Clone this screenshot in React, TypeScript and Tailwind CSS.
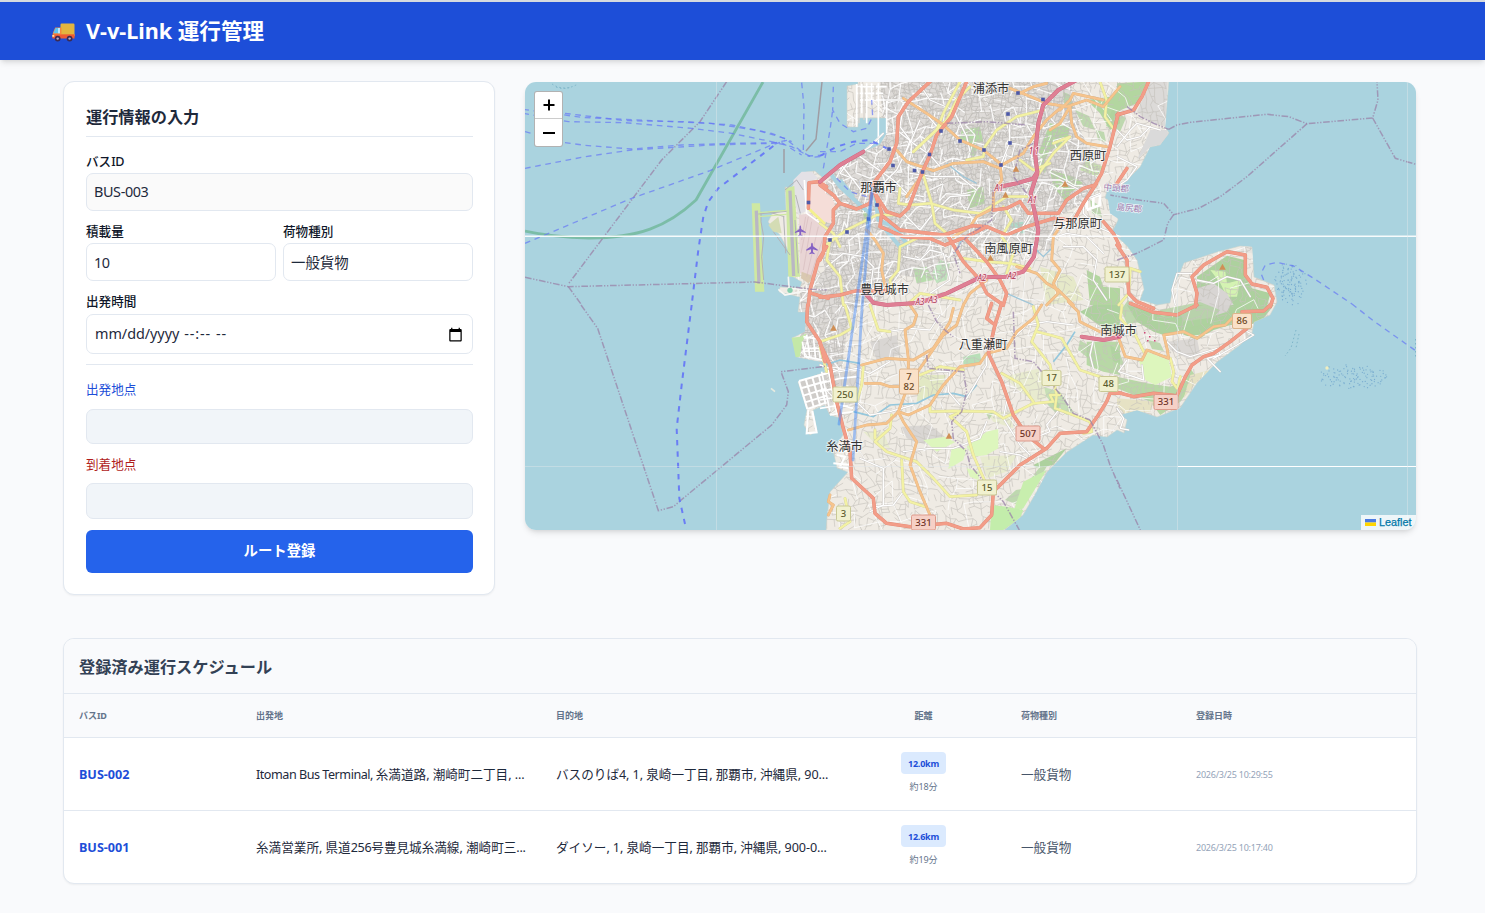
import React from "react";

type Zone = "a" | "b" | "c" | "d" | "e" | "f";
type Kind = "motorway" | "trunk" | "secondary" | "tertiary" | "local";

/* Map sheets: every sheet has a local grid three times finer than the canvas. */
const SHEET: Record<Zone, string> = {
  a: "translate(525 80) scale(0.33333)",
  b: "translate(820 80) scale(0.33333)",
  c: "translate(1117 80) scale(0.33333)",
  d: "translate(525 305) scale(0.33333)",
  e: "translate(820 305) scale(0.33333)",
  f: "translate(1117 305) scale(0.33333)",
};

const STYLE: Record<Kind, { edge: string; fill: string; w: number }> = {
  local: { edge: "#c4c0bd", fill: "#ffffff", w: 4 },
  tertiary: { edge: "#d6d39a", fill: "#f3f2a4", w: 6.5 },
  secondary: { edge: "#e0b282", fill: "#f6c48d", w: 6.5 },
  trunk: { edge: "#df8a76", fill: "#f39d88", w: 8.5 },
  motorway: { edge: "#c9607c", fill: "#df7f94", w: 10 },
};

const ROADS: [Kind, Zone, string][] = [
  ["local", "b", "300,15 330,60 400,90 440,170 450,215"],
  ["local", "b", "200,60 250,60 300,80 360,150"],
  ["local", "b", "190,160 150,200 90,240 60,280 110,300"],
  ["local", "b", "120,230 170,265 220,300 260,340 310,350"],
  ["local", "b", "230,150 280,190 330,225 360,260"],
  ["local", "b", "250,80 240,140 270,180 250,240"],
  ["local", "b", "300,120 270,190 230,270 180,320"],
  ["local", "b", "570,110 568,190 540,260"],
  ["local", "b", "250,400 300,450 340,400 390,350 450,345"],
  ["local", "b", "270,280 340,290 420,290 470,330"],
  ["local", "b", "60,250 100,300 130,340"],
  ["local", "b", "20,560 70,520 130,530 160,560 150,640"],
  ["local", "b", "250,530 300,540 330,510 370,520 390,600 330,640"],
  ["local", "b", "640,380 620,420 590,470 620,510"],
  ["local", "b", "640,300 720,300 780,330 830,310"],
  ["local", "b", "900,470 830,440 790,400 790,360 840,340"],
  ["local", "b", "730,500 790,500 830,540 820,600 860,660"],
  ["local", "b", "680,480 740,460 800,470 850,520"],
  ["local", "c", "0,200 40,150 60,130 130,150"],
  ["local", "c", "0,230 60,260 30,300 0,320"],
  ["local", "c", "0,150 30,180 70,170 100,140"],
  ["local", "c", "225,580 180,580 165,630 175,675"],
  ["local", "c", "240,600 290,610 330,590 370,600 400,650"],
  ["local", "e", "200,80 270,70 330,75 360,30"],
  ["local", "e", "0,180 60,200 110,190 150,205 210,170"],
  ["local", "e", "110,290 150,330 210,320 280,300"],
  ["local", "e", "120,460 190,490 190,600 150,620"],
  ["local", "e", "250,440 330,430 400,430 480,400 500,350"],
  ["local", "e", "350,200 390,200 385,260 420,300"],
  ["local", "e", "440,280 470,230 500,180 500,150"],
  ["local", "e", "560,290 550,340 600,420 630,450"],
  ["local", "e", "580,100 620,60 680,50 760,60"],
  ["local", "e", "720,310 680,360 690,380 640,400"],
  ["local", "e", "540,440 600,450 640,470"],
  ["local", "e", "250,560 220,600 160,605"],
  ["local", "e", "830,60 810,150 820,190"],
  ["local", "f", "150,110 180,140 220,155 300,130 310,150 270,160 310,200"],
  ["local", "f", "390,80 410,90 360,120 290,160"],
  ["local", "f", "30,165 5,200 80,225 75,180"],
  ["local", "f", "0,310 20,340 10,370 35,375"],
  ["tertiary", "b", "420,5 370,100 350,150 280,215"],
  ["tertiary", "b", "280,215 380,120 410,60 450,20"],
  ["tertiary", "b", "240,405 170,405 80,450 10,500"],
  ["tertiary", "b", "670,90 590,110 530,150 495,200 490,230 440,240"],
  ["tertiary", "b", "310,285 335,370 345,430 380,460"],
  ["tertiary", "b", "240,325 235,370 270,375 330,370 400,390 480,400 560,350 620,350"],
  ["tertiary", "b", "840,5 860,60 855,110 880,145"],
  ["tertiary", "b", "650,290 700,220 750,170 700,190"],
  ["tertiary", "b", "600,240 640,270 690,250"],
  ["tertiary", "b", "30,480 20,540 60,590 70,675"],
  ["tertiary", "b", "300,470 240,500 235,570 210,600 220,640"],
  ["tertiary", "b", "550,380 575,420 545,470 580,520 560,580"],
  ["tertiary", "b", "430,535 500,545 570,550 630,565"],
  ["tertiary", "b", "0,430 40,460 60,500"],
  ["tertiary", "b", "260,675 300,640 420,660"],
  ["tertiary", "e", "150,0 175,75 210,80"],
  ["tertiary", "e", "75,0 95,70 60,90 0,110"],
  ["tertiary", "e", "300,210 360,185 430,195"],
  ["tertiary", "e", "330,300 330,320 400,318 520,320 550,340 640,295 700,290 690,270 720,270"],
  ["tertiary", "e", "640,5 655,60 635,110 690,180 710,270 705,310 760,330 810,350 815,380 790,385"],
  ["tertiary", "e", "650,80 690,90 725,100 780,195 840,215"],
  ["tertiary", "e", "545,205 600,235 640,290"],
  ["tertiary", "e", "420,322 390,335 440,380 460,450 495,530"],
  ["tertiary", "e", "215,330 210,370 165,410 200,440 290,470 340,520 390,575 470,570"],
  ["tertiary", "e", "245,465 250,560 270,590 315,605"],
  ["tertiary", "e", "130,185 125,240 110,290"],
  ["tertiary", "e", "165,400 165,375"],
  ["tertiary", "e", "0,125 20,200"],
  ["tertiary", "e", "60,670 90,650 75,580"],
  ["tertiary", "f", "15,0 10,40 55,90 80,140"],
  ["tertiary", "f", "160,160 170,200 165,230 180,250 190,215"],
  ["tertiary", "c", "5,675 35,640 40,565 70,575"],
  ["secondary", "b", "250,55 320,100 370,135 420,180 490,210 540,250 545,300 520,340 520,385 470,410 450,440 400,470"],
  ["secondary", "b", "230,210 260,245 340,272 400,250 490,245 540,265"],
  ["secondary", "b", "545,255 610,220 640,170 680,120 720,85"],
  ["secondary", "b", "570,25 620,45 680,70 740,80 800,60 850,80 900,20"],
  ["secondary", "b", "720,90 750,60 760,40 850,60"],
  ["secondary", "b", "750,80 755,130 770,170 800,190 860,200"],
  ["secondary", "b", "750,80 720,130 690,150"],
  ["secondary", "b", "720,440 700,470 695,540 720,570 700,610 715,640 680,675"],
  ["secondary", "b", "590,560 650,580 680,610 715,630 760,675"],
  ["secondary", "b", "140,450 165,480 190,520 185,570 200,640"],
  ["secondary", "b", "500,600 450,640 430,675"],
  ["secondary", "b", "260,350 310,280"],
  ["secondary", "b", "680,10 640,20 600,40"],
  ["secondary", "e", "270,0 290,30 280,60 255,75 265,160 265,200"],
  ["secondary", "e", "125,180 200,160 280,165 340,130 390,50 400,10"],
  ["secondary", "e", "430,0 410,60 370,90 300,190 265,240"],
  ["secondary", "e", "135,235 180,235 210,245 240,245"],
  ["secondary", "e", "235,320 265,330 330,300 370,240 420,185 480,175 500,145 560,130 590,80 640,40 665,0"],
  ["secondary", "e", "265,240 235,320 200,355 140,360 85,375"],
  ["secondary", "e", "235,320 250,350 290,410 270,480 300,560 330,630"],
  ["secondary", "e", "745,-10 775,20 780,50 840,80 900,90"],
  ["secondary", "e", "30,570 25,590 40,600 25,630"],
  ["secondary", "f", "5,100 25,155 75,165 90,135 155,160 150,130 140,90 200,80 240,100 290,65 325,60 345,40"],
  ["trunk", "b", "330,5 265,65 235,110 230,190 210,245 160,310 150,370 110,387 60,370 40,390 40,430 15,470 10,520 0,540"],
  ["trunk", "b", "0,315 40,345 60,370"],
  ["trunk", "a", "905,320 880,305 852,308 850,385"],
  ["trunk", "a", "905,500 880,540 855,630 850,675"],
  ["trunk", "a", "860,640 910,655"],
  ["trunk", "d", "848,0 845,50 885,110 900,170"],
  ["trunk", "b", "440,5 395,110 350,165 330,225 305,280 265,385 240,408 200,395 165,340"],
  ["trunk", "b", "165,340 185,400 180,440 250,470 330,475 375,495 440,470 500,440 560,465 620,440 700,415 760,420"],
  ["trunk", "b", "190,410 240,450 370,465 460,437 500,440"],
  ["trunk", "b", "385,470 430,545 480,600 500,640 550,675"],
  ["trunk", "b", "430,470 500,545 540,600 560,640 550,675"],
  ["trunk", "b", "895,100 870,200 845,280 825,315 790,325 740,360 715,400 655,400"],
  ["trunk", "b", "830,310 790,370 765,415"],
  ["trunk", "b", "520,390 560,385 600,365 625,400 650,400"],
  ["trunk", "b", "850,425 880,460 900,500"],
  ["trunk", "c", "0,495 30,540 35,640 60,665 110,685"],
  ["trunk", "c", "97,0 75,50 50,90 0,105"],
  ["trunk", "c", "30,265 0,310"],
  ["trunk", "c", "235,680 240,640 225,590 260,555 330,515 385,525 385,585 405,612 450,622 468,655 460,680"],
  ["trunk", "b", "0,652 60,645 110,632 200,632"],
  ["trunk", "f", "0,262 50,275 110,265 180,272 205,215 225,180 260,155 290,145 340,110 390,70"],
  ["trunk", "f", "375,20 440,18 460,0"],
  ["trunk", "f", "40,-5 110,22 180,30 240,0"],
  ["trunk", "e", "0,115 30,180 50,290 70,370 90,440 95,520 160,580 165,625 200,655 270,665 380,655 430,672 480,668 515,630 520,560 600,480 680,430 720,385 800,380 835,330 860,290 870,265 905,265"],
  ["trunk", "e", "515,-5 500,40 525,60 545,-5"],
  ["trunk", "e", "525,60 505,145 545,230 580,330 620,390 670,430"],
  ["motorway", "b", "770,0 715,30 670,75 655,130 645,220 652,280 632,340 645,400 655,450 642,530 610,575 560,590 480,592 380,640 300,668 200,675 160,668 140,645"],
  ["motorway", "b", "652,275 640,295 590,310 540,320"],
  ["motorway", "b", "0,305 60,255 130,215"],
  ["motorway", "e", "785,95 850,105 900,95"],
];

const LAND =
  "858,80 858,84 847,86 847,127 858,127 858,118 887,118 887,133 880,145 863,152 840,163 823,178 815,171 806,172 797,180 791,188 785,187 786,210 772,214 768,222 780,235 788,250 790,275 802,282 800,288 780,287 779,292 800,297 798,312 807,312 805,332 792,338 797,357 823,362 825,372 798,382 807,410 804,425 810,435 817,431 813,410 825,405 830,415 840,418 843,435 833,450 837,468 848,472 830,492 827,518 826,532 1002,532 1023,515 1033,498 1047,472 1067,452 1093,435 1107,437 1117,430 1124,433 1127,420 1120,415 1137,410 1157,417 1180,408 1197,383 1217,362 1240,345 1252,333 1254,322 1270,315 1277,302 1274,285 1254,277 1252,247 1240,246 1217,252 1184,263 1180,273 1174,283 1170,303 1157,305 1140,300 1144,289 1137,260 1127,246 1112,232 1118,220 1117,206 1105,198 1108,187 1120,187 1140,167 1150,147 1160,145 1169,133 1165,127 1169,80";

const BUILT =
  "880,80 1070,80 1080,130 1100,170 1090,200 1060,215 1050,250 1010,265 960,262 940,280 900,275 880,300 850,310 840,380 830,415 800,380 800,290 825,270 812,200 840,165 885,140";

const shapes: [Zone, string, string][] = [
  ["b", "#eeeae4", "350,480 520,490 640,480 690,520 690,675 420,675 370,600"],
  ["b", "#e9e7e3", "230,300 300,300 300,350 250,390"],
  ["b", "#b5d9a5", "425,150 480,140 490,185 450,195 420,175"],
  ["b", "#bfe3bd", "360,540 390,550 380,600 350,610 335,580"],
  ["b", "#b8dcac", "280,565 320,560 340,600 290,610"],
  ["b", "#b3d6a0", "440,330 490,320 495,370 450,385"],
  ["b", "#b3d6a0", "690,130 750,140 740,190 690,210 670,250 655,220"],
  ["b", "#b3d6a0", "690,270 760,290 790,310 750,340 740,370 700,320"],
  ["b", "#b3d6a0", "800,60 870,50 900,20 900,130 870,150 840,100"],
  ["b", "#c8e0b0", "800,240 850,260 830,290 780,270"],
  ["b", "#b3d6a0", "800,570 840,590 850,620 900,625 900,675 810,675"],
  ["b", "#aed9c8", "570,430 610,425 615,460 580,460"],
  ["b", "#e6e9c9", "660,560 760,590 790,660 680,675"],
  ["b", "#add19e", "120,370 150,400 140,440"],
  ["c", "#b3d6a0", "0,10 90,5 60,70 0,95"],
  ["c", "#dcdad8", "100,5 152,5 145,140 95,125 60,95"],
  ["c", "#add19e", "240,590 330,527 382,540 385,590 405,625 460,640 450,680 240,680"],
  ["c", "#d4f3b2", "280,570 325,575 330,610 370,600 360,650 330,650 310,610"],
  ["c", "#d8d5d3", "240,625 290,610 330,640 350,675 240,675"],
  ["c", "#e5e3df", "370,500 405,497 405,518 375,518"],
  ["f", "#add19e", "30,0 80,10 140,35 235,10 260,0 470,0 440,40 400,60 340,60 290,75 240,105 190,85 140,90 110,80 60,50"],
  ["f", "#d6d3d1", "190,25 260,0 340,0 330,20 270,40 200,50"],
  ["f", "#b8d8a6", "0,215 90,235 160,245 195,230 220,190 240,220 190,290 130,330 100,290 0,250"],
  ["f", "#e6e2c4", "0,280 60,285 110,290 100,320 20,325 0,300"],
  ["f", "#dbd8d5", "150,110 240,100 250,150 210,160 160,135"],
  ["f", "#e6e2c4", "220,210 280,195 240,230 200,280"],
  ["e", "#add19e", "780,20 820,0 900,0 900,90 850,70"],
  ["e", "#b8d8a6", "800,110 900,110 900,210 850,200 800,180"],
  ["e", "#c6dfb6", "650,240 720,260 760,320 740,330 700,300"],
  ["e", "#b8dfb8", "430,155 480,145 485,175 430,178"],
  ["e", "#e2e8c4", "300,210 380,210 350,270 290,290"],
  ["e", "#e8ebcf", "550,215 660,190 680,280 640,290 590,250"],
  ["e", "#e8ebcf", "500,320 570,320 580,370 520,350"],
  ["e", "#e8ebcf", "480,455 590,450 560,500 500,520"],
  ["e", "#e8ebcf", "130,380 190,380 210,430 170,420"],
  ["e", "#add19e", "640,480 740,430 700,480 650,490"],
  ["e", "#a9dfc0", "35,205 60,205 60,235 35,235"],
  ["e", "#d9d6d3", "245,365 330,360 380,400 320,420 260,400"],
  ["e", "#d9d6d3", "0,120 50,130 70,200 110,200 110,300 60,300"],
  ["e", "#d9d6d3", "150,110 230,90 240,150 170,165"],
  ["a", "#e3e1e6", "805,300 830,275 860,275 880,295 850,305 850,390 820,405 808,360"],
  ["a", "#e9d5d5", "822,405 855,400 900,440 900,505 870,595 825,580"],
  ["a", "#f5ddd8", "855,310 900,305 900,430 855,385"],
  ["a", "#d9c8b0", "830,575 870,590 850,610 828,595"],
  ["a", "#cfe8a2", "680,370 705,370 718,635 690,635"],
  ["a", "#cfe8a2", "782,325 808,318 825,590 790,590"],
  ["a", "#d4dcb4", "730,435 760,410 770,460 745,455"],
];

/* Open ground without streets: golf courses, parks and the harbour yard. */
const OPEN_GROUND: [Zone, string, string][] = [
  ["b", "#f5ddd8", "0,330 35,350 45,375 30,430 0,420"],
  ["c", "#dadada", "60,240 100,150 150,150 155,165 130,195 100,200"],
  ["f", "#ddf6bd", "65,165 90,140 155,165 165,215 115,240 85,225"],
  ["e", "#ddf6bd", "310,405 375,395 405,412 350,440"],
  ["e", "#ddf6bd", "395,430 440,430 430,465 385,492"],
  ["e", "#ddf6bd", "440,425 500,380 535,372 535,430 500,450 460,455"],
  ["e", "#ddf6bd", "440,490 480,500 475,525 450,515"],
  ["e", "#c8eeae", "610,530 680,495 610,610 580,620"],
  ["e", "#c3edab", "515,600 560,605 610,615 600,640 550,675 510,675"],
];

function streets(step: number, seed: number, keep: number, x0: number, y0: number, x1: number, y1: number) {
  let s = seed;
  const rnd = () => {
    s = (s * 1664525 + 1013904223) % 4294967296;
    return s / 4294967296;
  };
  const cols = Math.ceil((x1 - x0) / step);
  const rows = Math.ceil((y1 - y0) / step);
  const pts: [number, number][][] = [];
  for (let r = 0; r <= rows; r++) {
    pts.push([]);
    for (let c = 0; c <= cols; c++) {
      const x = x0 + c * step + (rnd() - 0.5) * step * 0.9 + Math.sin(r / 4) * step;
      const y = y0 + r * step + (rnd() - 0.5) * step * 0.9 + Math.cos(c / 5) * step;
      pts[r].push([Math.round(x * 10) / 10, Math.round(y * 10) / 10]);
    }
  }
  let d = "";
  for (let r = 0; r < rows; r++)
    for (let c = 0; c < cols; c++) {
      const p = pts[r][c];
      if (rnd() < keep) d += `M${p}L${pts[r][c + 1]}`;
      if (rnd() < keep) d += `M${p}L${pts[r + 1][c]}`;
    }
  return d;
}

const RURAL = streets(5.5, 7, 0.58, 790, 74, 1290, 540);
const RURAL_WHITE = streets(17, 43, 0.5, 790, 74, 1290, 540);
const TOWN_GREY = streets(4, 21, 0.75, 790, 74, 1110, 430);
const TOWN_WHITE = streets(12, 99, 0.6, 790, 74, 1180, 470);

const BOUNDARIES: [Zone, string][] = [
  ["a", "605,5 525,125 450,200 410,240 130,612"],
  ["a", "0,592 130,620 690,606 860,628 905,630"],
  ["a", "130,620 170,675"],
  ["d", "168,0 218,70 400,617 445,605 465,588 740,360 785,300 790,260 768,200 900,184"],
  ["c", "155,148 180,135 220,127 450,103 515,110 570,131 767,114 783,60 780,5"],
  ["c", "767,114 835,235 900,254"],
  ["c", "570,131 390,290 310,350 245,385 170,404 140,370 50,358 -20,345"],
  ["c", "170,404 152,430 140,480 60,520 0,540"],
  ["c", "30,80 70,110 110,130 155,148"],
  ["e", "810,345 850,420 870,480 900,550"],
  ["f", "0,525 70,675"],
  ["e", "325,0 350,50 380,80 400,95"],
  ["e", "320,150 325,190 430,200 440,260 425,320 395,350 400,400 440,440 450,480 500,540 550,590 598,675"],
  ["e", "580,20 585,160 640,170 690,230 730,280 760,325 810,345"],
  ["b", "380,130 500,125 620,135"],
  ["b", "520,330 515,420 440,470 400,520 420,580"],
  ["b", "640,190 600,210 580,290 620,340"],
];

const FERRIES: [Zone, string, number][] = [
  ["a", "-5,88 170,112 380,122 560,130 700,152 780,175 830,215 860,232 900,228", 4],
  ["a", "-5,100 130,125 300,128 500,145 620,160 740,185 800,200 850,228 900,225", 4],
  ["a", "120,100 300,122 480,125 620,135 740,160 800,185", 4],
  ["a", "120,188 180,196 320,207 470,195 620,190 770,188 830,225", 4],
  ["a", "0,155 30,163", 4],
  ["a", "0,265 180,230 320,210 560,195 740,190 790,180", 4],
  ["a", "0,490 320,355 555,272 740,195 780,183", 4],
  ["a", "745,198 580,325 550,365 535,410 520,510 500,675", 6],
  ["a", "830,8 837,80 835,210", 4],
  ["d", "500,0 470,240 455,370 460,500 463,580 484,675", 6],
  ["b", "0,228 50,200 100,185 150,180 200,205", 6],
  ["b", "0,215 60,215 110,190 170,190", 4],
  ["b", "40,20 38,90 60,130 100,155 140,145 158,110 155,60", 4],
  ["b", "10,265 30,150 38,90", 4],
  ["b", "50,295 90,335 140,350", 4],
  ["c", "440,600 432,580 445,555 480,547 530,558 590,595 705,672", 4],
  ["f", "705,-3 770,48 900,140", 4],
];

const PLACES: [number, number, string][] = [
  [991, 93, "浦添市"],
  [1088, 159.5, "西原町"],
  [878.5, 191.5, "那覇市"],
  [1077.5, 227.5, "与那原町"],
  [1008.5, 252.5, "南風原町"],
  [884.5, 293.5, "豊見城市"],
  [983, 348.5, "八重瀬町"],
  [1118.5, 334.5, "南城市"],
  [844.5, 450.5, "糸満市"],
];

const SHIELDS: [number, number, string, string][] = [
  [1117, 274.5, "137", "y"],
  [1242, 321, "86", "o"],
  [845, 394.5, "250", "y"],
  [1051.5, 378, "17", "y"],
  [1108.5, 384, "48", "y"],
  [1166, 402, "331", "r"],
  [1028, 433.5, "507", "r"],
  [987, 487.5, "15", "y"],
  [843.5, 513.5, "3", "y"],
  [923.5, 522.5, "331", "r"],
];

const SHIELD_COLOR: Record<string, [string, string, string]> = {
  y: ["#f1f1cf", "#c9c995", "#5b5b2d"],
  o: ["#fae1c8", "#dcb48b", "#6b4724"],
  r: ["#f6d0c6", "#dd9a8b", "#6e3226"],
};

const STATIONS: [number, number][] = [
  [1018, 93], [1008, 114], [1043, 99.5], [941, 131], [960, 141], [1010, 143], [984, 150], [929.5, 154.5],
  [1001, 165], [893, 165.5], [914.5, 170.5], [922.5, 172], [889, 149], [877, 205], [868.5, 219], [847, 232], [830, 240], [808.5, 202.5],
];

const PEAKS: [number, number][] = [[1016, 169], [1005.5, 195], [1065, 184], [990.5, 258], [1222.5, 267], [833.5, 328], [949, 436]];

const dots: [number, number][] = [];
for (let i = 0; i < 230; i++) {
  const a = i * 2.39996;
  const q = Math.sqrt(((i % 115) + 0.5) / 115);
  const second = i >= 115;
  dots.push(
    second
      ? [1290 + Math.sin(i * 7.3) * 4 + Math.cos(a) * q * 14, 283 + Math.cos(i * 5.1) * 4 + Math.sin(a) * q * 19]
      : [1354 + Math.sin(i * 7.3) * 3 + Math.cos(a) * q * 35, 377 + Math.cos(i * 5.1) * 2 + Math.sin(a) * q * 11]
  );
}

const plane = "M0,-6 C.8,-6 1,-4.5 1,-2.3 L6,1 V2.3 L1,.8 V3.8 L2.8,5.2 V6 L0,5.3 L-2.8,6 V5.2 L-1,3.8 V.8 L-6,2.3 V1 L-1,-2.3 C-1,-4.5 -.8,-6 0,-6Z";

function RouteMap() {
  return (
    <svg viewBox="525 82 891 448" className="block h-full w-full" preserveAspectRatio="none">
      <defs>
        <clipPath id="land"><polygon points={LAND} /></clipPath>
        <clipPath id="built"><polygon points={BUILT} /></clipPath>
      </defs>
      <rect x="525" y="82" width="892" height="448" fill="#aad3df" />
      <g fill="#7aadd0">
        {dots.map(([x, y], i) => <circle key={i} cx={x} cy={y} r="0.65" />)}
        <circle cx="1327" cy="368" r="1.7" fill="#f1eec0" />
      </g>
      <g fill="none" stroke="#7eb5c9" strokeDasharray="1.5 2.5" strokeWidth="1">
        <path d="M552 84q12 8 26 0M556 87q8 3 15 0M1296 330l-5 18-6 8M1299 334l-3 14M1415.500 339v18" />
      </g>
      <polygon points={LAND} fill="#efebe4" stroke="#c9d5cf" strokeWidth="0.6" />
      <g clipPath="url(#land)">
        <polygon points={BUILT} fill="#dedbd8" />
        {shapes.filter(([z]) => z !== "a").map(([z, c, p], i) => <polygon key={i} points={p} fill={c} transform={SHEET[z]} />)}
        <g fill="#add19e" opacity="0.75">
          <path d="M1090 200l9 5 3 12-10-4zM1063 92l8 3 2 14-9-4zM1075 110l14 6 6 14-12-4zM1128 300l9 8 4 14-14 2-6-14zM1160 310l40-8 20 8-12 14-30 6-20-8zM970 145l7 3-2 9-6-3zM1052 395l8 10-4 8-9-9zM1005 500l11-10 12-2-12 16zM985 410l8 3-4 7zM1080 340l12 8-4 10-10-8zM1112 110l14 8-6 14-14-6zM1096 130l8 2 2 10-8-2zM1040 160l8 4-3 9-6-4zM1110 345l9 6 6 16-12-6zM1148 340l12 3 4 8-12-2zM1030 480l9-12 8-2-8 14z" />
        </g>
        <path d={RURAL} fill="none" stroke="#c6c2bc" strokeWidth="0.7" strokeOpacity="0.9" />
        <path d={RURAL_WHITE} fill="none" stroke="#fff" strokeWidth="1" strokeOpacity="0.75" />
        <g clipPath="url(#built)" fill="none">
          <path d={TOWN_GREY} stroke="#bfbcb9" strokeWidth="0.8" />
          <path d={TOWN_WHITE} stroke="#ffffff" strokeWidth="1.200" strokeOpacity="0.9" />
        </g>
        {OPEN_GROUND.map(([z, c, p], i) => <polygon key={i} points={p} fill={c} transform={SHEET[z]} />)}
      </g>
      {shapes.filter(([z]) => z === "a").map(([z, c, p], i) => <polygon key={i} points={p} fill={c} transform={SHEET[z]} />)}
      <g transform={SHEET.a} fill="none">
        <path d="M694 392L702 610M795 332L806 588" stroke="#b9b7c4" strokeWidth="10" />
        <path d="M708 395V425L716 470 710 530 716 600M700 402L785 394M780 330L815 300 835 330M812 345L826 400M810 420L820 580M776 410L782 520M745 455L795 525M728 395L778 410" stroke="#b3b2b6" strokeWidth="3" />
        <path d="M700 398L785 391M700 410L785 403" stroke="#cfe8a2" strokeWidth="4" />
        <path d="M835 570L860 425M845 590L880 440M855 595L895 470M828 520L850 410M830 480L842 410" stroke="#d2b6b8" strokeWidth="1.6" />
        <path d="M790 590L792 625 855 630M760 628L780 645 830 635" stroke="#f7f7f4" strokeWidth="5" />
        <path d="M838 300L845 400 900 440" stroke="#ffffff" strokeWidth="5" />
        <path d="M853 388L900 432" stroke="#f4f08c" strokeWidth="8" />
        <circle cx="795" cy="631" r="8" fill="#86cfae" />
      </g>
      <g transform={SHEET.b} fill="none">
        <path d="M110 12V140M125 12V100M140 10V130M120 60H240M155 10V70M175 10V190M200 60V160M190 160L130 215M110 20H200M110 40H190" stroke="#ffffff" strokeWidth="5" />
        <path d="M117 20V130M132 25V120M165 15V60" stroke="#d8d4ce" strokeWidth="4" />
        <path d="M35 285L60 320 120 375 150 400M165 345L175 420 220 440 260 490 240 500 190 440M60 300L100 350" stroke="#aad3df" strokeWidth="12" />
        <path d="M380 250L430 290 470 310M500 440L470 460 430 470 405 520M560 640L640 675M640 500L670 530 700 500" stroke="#9fc6d8" strokeWidth="4" />
        <path d="M785 360L840 345 840 375 800 390M820 350V385M800 357V388" stroke="#fff" strokeWidth="8" />
        <path d="M860 330L900 350V420L870 400Z" fill="#aad3df" />
      </g>
      <g transform={SHEET.e} fill="none">
        <path d="M100 320L160 335 210 300 290 295 340 270 400 265 440 275M0 185L60 165 120 175M700 170L740 120 765 80M440 275L470 240" stroke="#94c7dc" strokeWidth="5" />
        <path d="M50 450L75 455 60 485 85 490M40 475L95 480M60 440L90 435" stroke="#fff" strokeWidth="6" />
      </g>
      <g transform={SHEET.d} fill="none">
        <polygon points="800,98 825,95 845,85 832,110 825,155 812,157" fill="#c4e8a8" />
        <path d="M832 110L840 155 895 165M835 95L895 105M845 90L855 160M865 95L872 162M835 130H895M885 110V160" stroke="#fff" strokeWidth="5" />
        <polygon points="822,228 905,205 905,298 847,312" fill="#cfccc9" />
        <path d="M822 228L905 205M828 250L905 228M835 272L905 250M840 292L905 272M847 312L905 292M822 228L847 312M842 222L867 308M862 217L886 303M882 212L902 298M850 315L845 385 875 382 862 318" stroke="#fff" strokeWidth="6" />
        <path d="M738 250L750 260" stroke="#e8ebe0" strokeWidth="5" />
      </g>
      <g transform={SHEET.e} fill="none" stroke="#fff" strokeWidth="5">
        <path d="M0 210L60 195 110 195M0 235L60 220 110 215M0 260L65 245M0 285L60 275M5 200L30 320M25 195L50 325M0 310L60 300 100 310M30 330L100 320" />
      </g>
      <g fill="none" strokeLinecap="round" strokeLinejoin="round">
        {(["local", "tertiary", "secondary", "trunk", "motorway"] as Kind[]).map((k) => (
          <g key={k}>
            {ROADS.filter((r) => r[0] === k).map(([, z, p], i) => (
              <polyline key={i} points={p} transform={SHEET[z]} stroke={STYLE[k].edge} strokeWidth={STYLE[k].w + 2} />
            ))}
            {ROADS.filter((r) => r[0] === k).map(([, z, p], i) => (
              <polyline key={i} points={p} transform={SHEET[z]} stroke={STYLE[k].fill} strokeWidth={STYLE[k].w} />
            ))}
          </g>
        ))}
      </g>
      <g fill="none">
        <path d="M525 231Q552 237 589 238C638 238 667 227 696 200L763 82" stroke="#73b99d" strokeWidth="2.8" opacity="0.85" />
        <path d="M822 82L816 139 806 151M784 149V173" stroke="#9f9ca3" strokeWidth="1.5" />
        {BOUNDARIES.map(([z, p], i) => (
          <polyline key={i} points={p} transform={SHEET[z]} stroke="#9a83a8" strokeOpacity="0.75" strokeWidth="4.5" strokeDasharray="20 5 4 5 4 5" />
        ))}
        {FERRIES.map(([z, p, w], i) => (
          <polyline key={i} points={p} transform={SHEET[z]} stroke="#6678f5" strokeOpacity={w > 5 ? 0.95 : 0.7} strokeWidth={w} strokeDasharray={w > 5 ? "16 18" : "17 14"} />
        ))}
      </g>
      <g fill="#4d59a8">{STATIONS.map(([x, y], i) => <rect key={i} x={x - 1.8} y={y - 1.8} width="3.6" height="3.6" />)}</g>
      <g fill="#d08f55">{PEAKS.map(([x, y], i) => <path key={i} d={`M${x} ${y - 3.2}l3.3 6h-6.6z`} />)}</g>
      <g fill="#8461c4">
        <path d={plane} transform="translate(800.3 231) scale(.9)" />
        <path d={plane} transform="translate(812 248.5) scale(.95)" />
      </g>
      <g fill="#d1497a"><circle cx="1118" cy="336" r="2" /><path d="M1144 332h1.5v1.5h-1.5zM1149 336h1.5v1.5h-1.5zM1154 340h1.5v1.5h-1.5zM1147 340h1.5v1.5h-1.5z" /></g>
      <g fontFamily="'Noto Sans', 'Noto Sans CJK JP', sans-serif" textAnchor="middle">
        <g fontSize="8" fontStyle="italic" fill="#a63250" stroke="#fbe3e6" strokeWidth="1.6" paintOrder="stroke">
          <text x="1031" y="154">1</text><text x="1037" y="154">1</text>
          <text x="999" y="191">A1</text><text x="1032.500" y="203">A1</text>
          <text x="982" y="281">A2</text><text x="1012" y="279">A2</text>
          <text x="920" y="305">A3</text><text x="933" y="303">A3</text>
        </g>
        <g fontSize="8.500" fill="#a07cae" stroke="#fff" strokeOpacity=".7" strokeWidth="1.5" paintOrder="stroke">
          <text x="1116" y="191" transform="rotate(5 1116 191)">中頭郡</text>
          <text x="1129" y="211" transform="rotate(6 1129 211)">島尻郡</text>
        </g>
        <g stroke="#3b82f6" strokeOpacity="0.45" strokeWidth="2.800" fill="none" strokeLinecap="round">
          <path d="M872.500 188L855 312 839 424" />
          <path d="M872.500 188L862 308 853 460" />
        </g>
        <g fontSize="12.200" fill="#333" stroke="#fff" strokeOpacity="0.6" strokeWidth="2" paintOrder="stroke">
          {PLACES.map(([x, y, t]) => <text key={t} x={x} y={y}>{t}</text>)}
        </g>
        <g fontSize="9.500" fontWeight="500">
          {SHIELDS.map(([x, y, t, k]) => {
            const w = t.length === 3 ? 24 : t.length === 2 ? 19 : 14;
            const [bg, edge, ink] = SHIELD_COLOR[k];
            return (
              <g key={t + x}>
                <rect x={x - w / 2} y={y - 7.5} width={w} height="15" rx="1.500" fill={bg} stroke={edge} />
                <text x={x} y={y + 3.4} fill={ink}>{t}</text>
              </g>
            );
          })}
          <rect x="899.500" y="369" width="19" height="25" rx="1.500" fill="#fae1c8" stroke="#dcb48b" />
          <text x="909" y="379.500" fill="#6b4724">7</text>
          <text x="909" y="390" fill="#6b4724">82</text>
        </g>
      </g>
      <path d="M525 236.300H1417" stroke="#fff" strokeOpacity="0.9" strokeWidth="1.400" />
      <path d="M1178 466.500H1417" stroke="#fff" strokeWidth="1" />
      <path d="M525 466.500H1178M716.500 82V530M1177.500 82V530M1407.500 82V530" stroke="#dfe6ea" strokeOpacity="0.45" strokeWidth="1" />
    </svg>
  );
}

function Truck() {
  return (
    <svg viewBox="0 0 23 19" className="h-[19px] w-[23px]">
      <rect x="8.500" y="0.500" width="14" height="13" rx="1.200" fill="#e3b53f" />
      <path d="M9 11h13.500v2.500H9z" fill="#e7933c" />
      <path d="M3.200 4.500H9.500V15H.8V10z" fill="#f58a3c" />
      <path d="M3.600 5H8v5.200H1.300z" fill="#5cc3f2" />
      <path d="M6 5h2v5.200H6z" fill="#b9e6fa" />
      <path d="M.5 11.500H22.500V15.500H.5z" fill="#ee5a34" />
      <path d="M.3 12h2v1.800h-2z" fill="#ffe2a0" />
      <g fill="#3c2a52"><circle cx="5.700" cy="15.600" r="2.900" /><circle cx="17.600" cy="15.600" r="2.900" /></g>
      <g fill="#b7a9c6"><circle cx="5.700" cy="15.600" r="1.200" /><circle cx="17.600" cy="15.600" r="1.200" /></g>
    </svg>
  );
}

const rows = [
  { id: "BUS-002", from: "Itoman Bus Terminal, 糸満道路, 潮崎町二丁目, ...", to: "バスのりば4, 1, 泉崎一丁目, 那覇市, 沖縄県, 90...", km: "12.0km", min: "約18分", cargo: "一般貨物", at: "2026/3/25 10:29:55" },
  { id: "BUS-001", from: "糸満営業所, 県道256号豊見城糸満線, 潮崎町三...", to: "ダイソー, 1, 泉崎一丁目, 那覇市, 沖縄県, 900-0...", km: "12.6km", min: "約19分", cargo: "一般貨物", at: "2026/3/25 10:17:40" },
];

const columns = "grid grid-cols-[177px_300px_300px_165px_175px_1fr] items-center";

/* Latin words are set tight, punctuation between place names a little looser. */
function tracking(run: string) {
  if (/[a-z]{4}/.test(run)) return "tracking-[-0.038em]";
  if (run.includes(", ")) return "tracking-[-0.006em]";
  return "tracking-[-0.026em]";
}

function Mixed({ text }: { text: string }) {
  return (
    <>
      {text.split(/([\x20-\x7e]+)/).map((part, i) =>
        i % 2 ? <span key={i} className={tracking(part)}>{part}</span> : <React.Fragment key={i}>{part}</React.Fragment>
      )}
    </>
  );
}

const label = "block text-[12.6px] leading-[18px] font-medium text-[#0f172a]";
const field = "flex w-full items-center rounded-[7px] border border-[#e2e8f0] px-[7px] text-[14.4px] text-[#1e293b]";

export default function App() {
  return (
    <div className="h-[913px] overflow-hidden bg-[#f9fafc] font-['Noto_Sans','Noto_Sans_CJK_JP',sans-serif] text-[#1e293b]">
      <header className="flex h-[60px] items-center border-t-2 border-[#d6dadf] bg-[#1d4ed8] pl-[52px] shadow-md">
        <div className="pt-[2px]"><Truck /></div>
        <h1 className="ml-[11px] text-[21.6px] leading-[30px] font-bold whitespace-nowrap text-white">V-v-Link 運行管理</h1>
      </header>

      <main className="px-[63px] pt-[21px]">
        <div className="flex items-start gap-[30px]">
          <section className="h-[514px] w-[432px] rounded-[11px] border border-[#e2e8f0] bg-white pt-[22px] pr-[21px] pl-[22px] shadow-xs">
            <h2 className="h-[33px] border-b border-[#e2e8f0] text-[16.2px] leading-[26px] font-semibold text-[#1e293b]">運行情報の入力</h2>
            <label className={label + " mt-[16px]"}><Mixed text="バスID" /></label>
            <div className={field + " mt-[2px] h-[38px] bg-[#fafafa]"}><Mixed text="BUS-003" /></div>
            <div className="mt-[12px] grid grid-cols-2 gap-[7px]">
              <div>
                <label className={label}>積載量</label>
                <div className={field + " mt-[2px] h-[38px] pt-[2px]"}><Mixed text="10" /></div>
              </div>
              <div>
                <label className={label}>荷物種別</label>
                <div className={field + " mt-[2px] h-[38px] pt-[2px]"}>一般貨物</div>
              </div>
            </div>
            <label className={label + " mt-[12px]"}>出発時間</label>
            <div className={field + " mt-[3px] h-[40px] justify-between pr-[9px] pl-[8px]"}>
              <span className="whitespace-nowrap">
                <span className="tracking-[-0.003em]">mm/dd/yyyy</span>
                <span className="ml-[5px] tracking-[0.06em]">--:--</span>
                <span className="ml-[5px] tracking-[0.06em]">--</span>
              </span>
              <svg viewBox="0 0 24 24" className="h-[15px] w-[15px]">
                <path fill="#000" d="M20 3h-1V1h-2v2H7V1H5v2H4c-1.100 0-2 .9-2 2v16c0 1.100.9 2 2 2h16c1.100 0 2-.9 2-2V5c0-1.100-.9-2-2-2zm0 18H4V8h16v13z" />
              </svg>
            </div>
            <hr className="mt-[10px] border-[#e2e8f0]" />
            <p className="mt-[16px] text-[12.6px] leading-[18px] text-[#1d4ed8]">出発地点</p>
            <div className="mt-[10px] h-[35px] rounded-[7px] border border-[#e2e8f0] bg-[#f1f5f9]" />
            <p className="mt-[12px] text-[12.6px] leading-[18px] text-[#b01c1c]">到着地点</p>
            <div className="mt-[9px] h-[36px] rounded-[7px] border border-[#e2e8f0] bg-[#f1f5f9]" />
            <button className="mt-[11px] flex h-[43px] w-full items-center justify-center rounded-[6px] bg-[#2563eb] pb-[2px] text-[14.4px] font-bold text-white">ルート登録</button>
          </section>

          <section className="relative mt-px h-[448px] w-[891px] overflow-hidden rounded-[11px] shadow-md">
            <RouteMap />
            <div className="absolute top-[9px] left-[9px] w-[29px] overflow-hidden rounded-[3px] border border-black/30 bg-white">
              <button className="flex h-[27px] w-full items-center justify-center border-b border-[#ccc]">
                <svg viewBox="0 0 12 12" className="h-3 w-3"><path d="M6 .5V11.500M.5 6H11.500" stroke="#000" strokeWidth="2" /></svg>
              </button>
              <button className="flex h-[27px] w-full items-center justify-center">
                <svg viewBox="0 0 12 12" className="h-3 w-3"><path d="M0 6H12" stroke="#000" strokeWidth="2" /></svg>
              </button>
            </div>
            <div className="absolute right-0 bottom-0 flex h-[15px] w-[55px] items-center gap-[3px] bg-white/80 pl-[4px] font-['Liberation_Sans',sans-serif] text-[10.8px] text-[#0078a8]">
              <svg viewBox="0 0 11 7" className="h-[7px] w-[11px]"><path fill="#4c7be1" d="M0 0h11v3.500H0z" /><path fill="#ffd500" d="M0 3.500h11V7H0z" /></svg>
              <span className="[-webkit-text-stroke:0.25px_#0078a8]">Leaflet</span>
            </div>
          </section>
        </div>

        <section className="mt-[43px] h-[246px] w-[1354px] overflow-hidden rounded-[11px] border border-[#e2e8f0] bg-white shadow-xs">
          <h2 className="h-[55px] border-b border-[#e2e8f0] bg-[#f9fafc] px-[15px] pt-px text-[16.2px] leading-[55px] font-bold text-[#334155]">登録済み運行スケジュール</h2>
          <div className={columns + " h-[44px] border-b border-[#e2e8f0] bg-[#f9fafc] text-[9px] font-bold text-[#64748b]"}>
            <span className="px-[15px]"><Mixed text="バスID" /></span>
            <span className="px-[15px]">出発地</span>
            <span className="px-[15px]">目的地</span>
            <span className="text-center">距離</span>
            <span className="px-[15px]">荷物種別</span>
            <span className="px-[15px]">登録日時</span>
          </div>
          {rows.map((r, i) => (
            <div key={r.id} className={columns + " text-[12.6px] whitespace-nowrap " + (i === 0 ? "h-[73px] border-b border-[#e2e8f0]" : "h-[72px]")}>
              <span className="px-[15px] pt-[2px] font-bold text-[#1d4ed8]">{r.id}</span>
              <span className="px-[15px] pt-[2px]"><Mixed text={r.from} /></span>
              <span className="px-[15px] pt-[2px]"><Mixed text={r.to} /></span>
              <span className="flex flex-col items-center pb-[3px]">
                <span className="flex h-[22px] w-[45px] items-center justify-center rounded-[4px] bg-[#dbeafe] pt-px text-[9px] font-bold text-[#1d4ed8]"><Mixed text={r.km} /></span>
                <span className="mt-[6px] text-[9px] leading-[13px] text-[#64748b]"><Mixed text={r.min} /></span>
              </span>
              <span className="px-[15px] pt-[2px] text-[#475569]">{r.cargo}</span>
              <span className="px-[15px] pt-[2px] text-[9px] text-[#94a3b8]"><Mixed text={r.at} /></span>
            </div>
          ))}
        </section>
      </main>
    </div>
  );
}
